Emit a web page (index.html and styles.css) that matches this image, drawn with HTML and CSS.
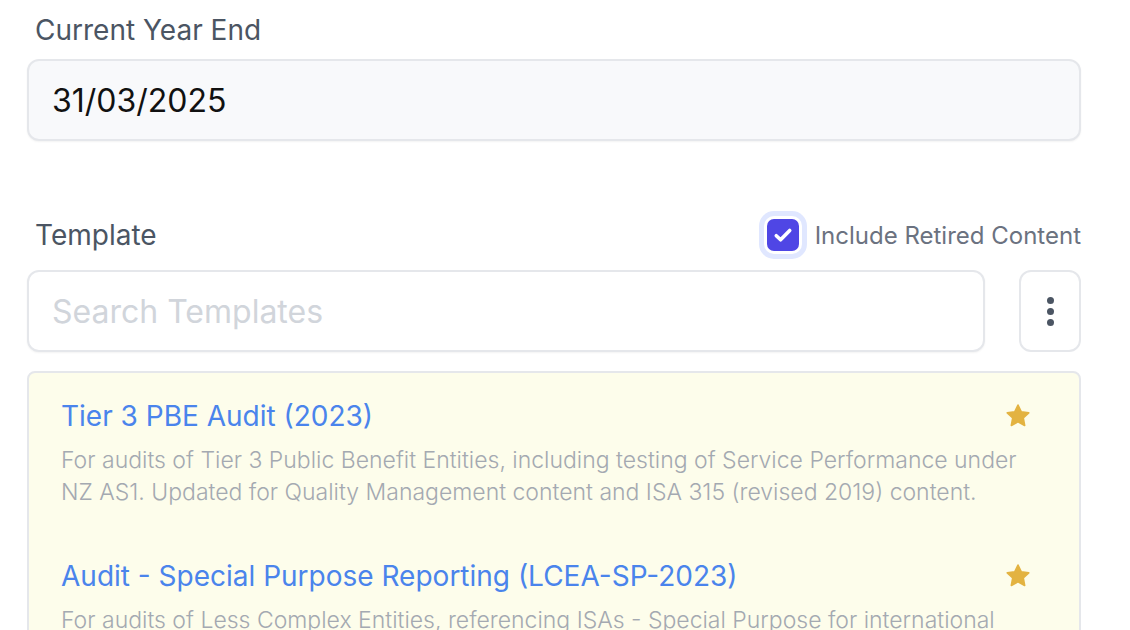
FILE: index.html
```html
<!DOCTYPE html>
<html lang="en">

<head>
  <meta charset="UTF-8">
  <meta name="viewport" content="width=device-width, initial-scale=1.0">
  <title>New Engagement</title>
  <link rel="stylesheet" href="styles.css">
</head>

<body>
  <div class="form">
    <div class="field">
      <label class="field-label" for="year-end">Current Year End</label>
      <input type="text" id="year-end" class="date-input" value="31/03/2025">
    </div>

    <div class="template-head">
      <span class="field-label">Template</span>
      <label class="retired">
        <span class="check">
          <svg width="24" height="24" viewBox="0 0 20 20" fill="none">
            <path d="M4.4 10.6l3.6 3.4L15.6 6.2" stroke="#fff" stroke-width="3" stroke-linecap="round" stroke-linejoin="round" />
          </svg>
        </span>
        Include Retired Content
      </label>
    </div>

    <!-- Search + options -->
    <div class="search-row">
      <input type="text" class="search-input" placeholder="Search Templates">
      <button class="menu-btn" aria-label="More options">
        <span class="dot"></span>
        <span class="dot"></span>
        <span class="dot"></span>
      </button>
    </div>

    <div class="template-list">
      <div class="template-item">
        <div class="item-top">
          <a class="item-title" href="#">Tier 3 PBE Audit (2023)</a>
          <svg class="star" viewBox="0 0 24 24" width="28" height="28">
            <path d="M12 2.6l2.8 5.9 6.4.8-4.7 4.4 1.2 6.4L12 17l-5.7 3.1 1.2-6.4-4.7-4.4 6.4-.8z" fill="#e3b341" stroke="#e3b341" stroke-width="1.4" stroke-linejoin="round" />
          </svg>
        </div>
        <p class="item-desc">For audits of Tier 3 Public Benefit Entities, including testing of Service Performance under NZ AS1. Updated for Quality Management content and ISA 315 (revised 2019) content.</p>
      </div>

      <div class="template-item">
        <div class="item-top">
          <a class="item-title" href="#">Audit - Special Purpose Reporting (LCEA-SP-2023)</a>
          <svg class="star" viewBox="0 0 24 24" width="28" height="28">
            <path d="M12 2.6l2.8 5.9 6.4.8-4.7 4.4 1.2 6.4L12 17l-5.7 3.1 1.2-6.4-4.7-4.4 6.4-.8z" fill="#e3b341" stroke="#e3b341" stroke-width="1.4" stroke-linejoin="round" />
          </svg>
        </div>
        <p class="item-desc">For audits of Less Complex Entities, referencing ISAs - Special Purpose for international users. Updated for Quality Management content.</p>
      </div>
    </div>
  </div>
</body>

</html>
```

FILE: styles.css
```css
/* General */
body {
  font-family: Inter, 'Noto Sans', sans-serif;
  margin: 0;
  background-color: #fff;
  overflow: hidden;
}

.form {
  width: 1054px;
  padding: 14px 0 0 27px;
}

.field-label {
  display: block;
  font-size: 28px;
  line-height: 32px;
  color: #4b5563;
  padding-left: 8px;
}

/* Year end */
.date-input {
  display: block;
  box-sizing: border-box;
  width: 100%;
  height: 82px;
  margin-top: 13px;
  padding: 0 23px;
  font-family: inherit;
  font-size: 32px;
  color: #111;
  background-color: #f8f9fb;
  border: 2px solid #e5e7eb;
  border-radius: 12px;
  box-shadow: 0 1px 2px rgba(0, 0, 0, 0.05);
  outline: none;
}

/* Template header */
.template-head {
  display: flex;
  justify-content: space-between;
  align-items: center;
  margin-top: 78px;
}

.retired {
  display: flex;
  align-items: center;
  gap: 16px;
  font-size: 24px;
  color: #6b7280;
}

.check {
  width: 32px;
  height: 32px;
  border-radius: 7px;
  background-color: #4f46e5;
  display: flex;
  justify-content: center;
  align-items: center;
  box-shadow: 0 0 0 3px #fff, 0 0 0 8px #e0e7ff;
}

/* Search row */
.search-row {
  display: flex;
  gap: 34px;
  margin-top: 19px;
}

.search-input {
  flex: 1;
  box-sizing: border-box;
  height: 82px;
  padding: 0 23px;
  font-family: inherit;
  font-size: 32px;
  border: 2px solid #e5e7eb;
  border-radius: 12px;
  box-shadow: 0 1px 2px rgba(0, 0, 0, 0.05);
  outline: none;
}

.search-input::placeholder {
  color: #d1d5db;
}

.menu-btn {
  width: 62px;
  height: 82px;
  background: #fff;
  border: 2px solid #e5e7eb;
  border-radius: 12px;
  display: flex;
  flex-direction: column;
  justify-content: center;
  align-items: center;
  gap: 4px;
  padding: 0;
}

.dot {
  width: 7px;
  height: 7px;
  border-radius: 50%;
  background-color: #4b5563;
}

/* Template list */
.template-list {
  margin-top: 19px;
  background-color: #fdfdeb;
  border: 2px solid #e5e7eb;
  border-radius: 8px;
}

.template-item {
  padding: 25px 47px 25px 32px;
}

.item-top {
  display: flex;
  justify-content: space-between;
  align-items: center;
}

.item-title {
  font-size: 28px;
  line-height: 36px;
  color: #4a84ec;
  text-decoration: none;
}

.item-desc {
  margin: 10px 0 0;
  font-size: 23px;
  font-weight: 300;
  line-height: 32px;
  color: #a4a9b1;
}
```
